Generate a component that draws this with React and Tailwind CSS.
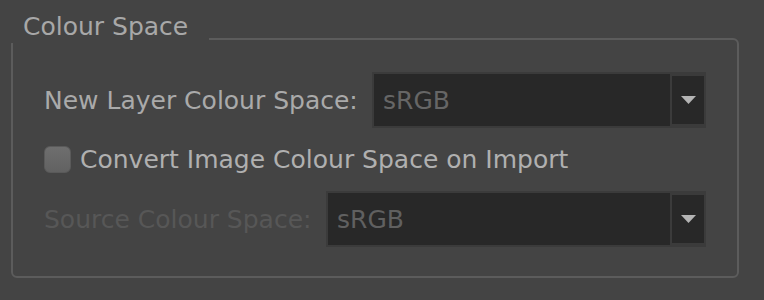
const Select = ({ width, muted }) => (
  <div className={`flex h-[56px] ${width} items-stretch bg-[#3b3b3b] p-[2px]`}>
    <div className="flex flex-1 items-center bg-[#282828] pl-[9px]">
      <span className={muted ? "text-[#606060]" : "text-[#666666]"}>sRGB</span>
    </div>
    <div className="ml-[2px] my-[2px] flex w-[32px] items-center justify-center bg-[#282828]">
      <svg width="15" height="8" viewBox="0 0 15 8">
        <polygon points="0,0 15,0 7.5,8" fill="#b4b4b4" />
      </svg>
    </div>
  </div>
);

export default function App() {
  return (
    <div
      className="h-[300px] w-[764px] overflow-hidden bg-[#444444] pl-[11px] pt-[38px] text-[25px] leading-none"
      style={{ fontFamily: '"DejaVu Sans", "Liberation Sans", sans-serif' }}
    >
      <div className="relative h-[240px] w-[728px] rounded-[6px] border-2 border-[#5c5c5c]">
        <div className="absolute -left-[3px] -top-[40px] flex h-[43px] w-[199px] items-center bg-[#444444] pl-[13px] pt-[9px] text-[#a8a8a8]">
          Colour Space
        </div>
        <div className="flex flex-col pl-[31px] pt-[32px]">
          <div className="flex items-center">
            <span className="w-[328px] text-[#aaaaaa]">New Layer Colour Space:</span>
            <Select width="w-[334px]" />
          </div>
          <div className="mt-[18px] flex items-center">
            <div className="h-[27px] w-[27px] rounded-[6px] border border-[#5a5a5a] bg-gradient-to-b from-[#6e6e6e] to-[#626262]" />
            <span className="ml-[9px] text-[#b0b0b0]">Convert Image Colour Space on Import</span>
          </div>
          <div className="mt-[18px] flex items-center">
            <span className="w-[282px] text-[#575757]">Source Colour Space:</span>
            <Select width="w-[380px]" muted />
          </div>
        </div>
      </div>
    </div>
  );
}
